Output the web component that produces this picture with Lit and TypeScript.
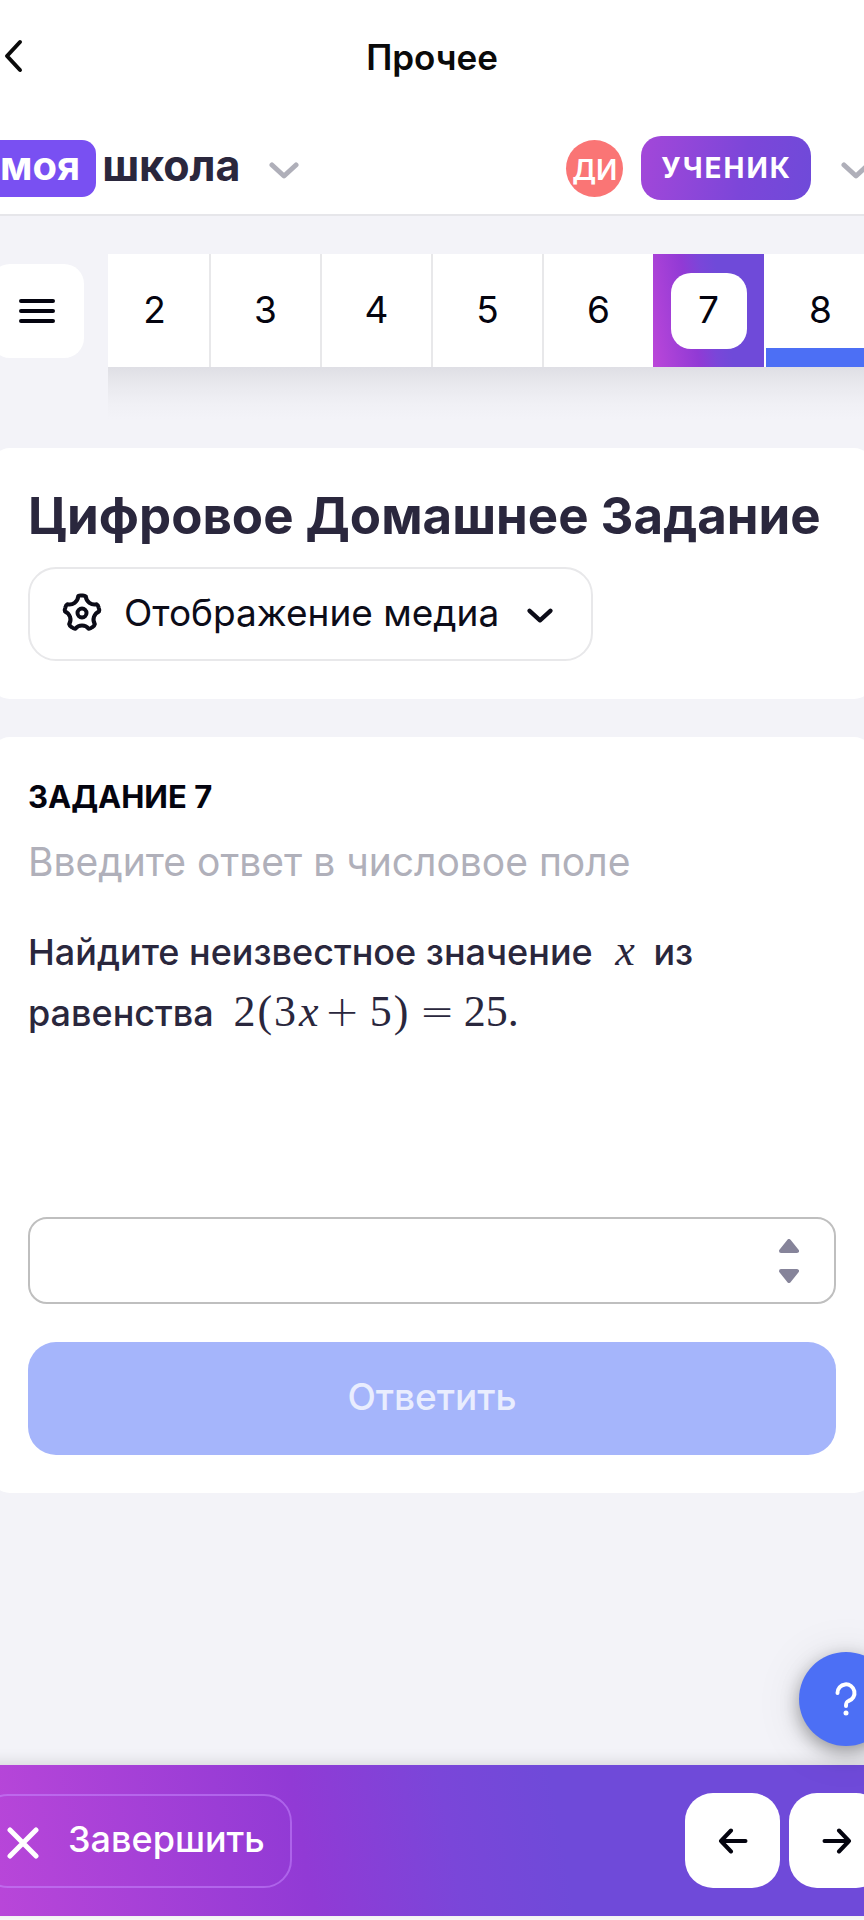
import { LitElement, html, css, svg } from "lit";
import { customElement, property, state } from "lit/decorators.js";
import { classMap } from "lit/directives/class-map.js";

const chevronDown = (size: string) => html`
  <svg class="chevron ${size}" viewBox="0 0 30 18" aria-hidden="true">
    ${svg`<path d="M3 3l12 11L27 3" fill="none" stroke="currentColor" stroke-width="5" stroke-linecap="round" stroke-linejoin="round" />`}
  </svg>
`;

/** Outline of a five-toothed gear centred in a 40 by 40 box. */
function gearPath(): string {
  const at = (deg: number, r: number) => {
    const a = (deg * Math.PI) / 180;
    return `${(20 + r * Math.cos(a)).toFixed(2)} ${(20 + r * Math.sin(a)).toFixed(2)}`;
  };
  let d = `M${at(-102, 17.5)}`;
  for (let k = 0; k < 5; k++) {
    const t = -90 + 72 * k;
    d += `Q${at(t - 8, 18)} ${at(t, 17.5)}Q${at(t + 8, 18)} ${at(t + 13, 17)}`;
    d += `C${at(t + 20, 12)} ${at(t + 52, 12)} ${at(t + 59, 17)}`;
  }
  return d + "z";
}

@customElement("task-tabs")
export class TaskTabs extends LitElement {
  @property({ type: Array }) items: number[] = [];
  @property({ type: Number }) current = 0;
  @property({ type: Number }) answered = 0;

  static styles = css`
    :host {
      display: block;
      flex: 1;
      min-width: 0;
      position: relative;
    }
    .strip {
      display: flex;
      overflow: hidden;
      background: #fff;
    }
    .shade {
      position: absolute;
      left: 0;
      right: 0;
      top: 100%;
      height: 52px;
      background: linear-gradient(#dfdfe5, #e9e9ee 35%, #f0f0f5 70%, #f3f3f8);
    }
    .tab {
      flex: none;
      box-sizing: border-box;
      width: 111px;
      height: 113px;
      padding: 0 0 2px;
      border: 0;
      border-right: 2px solid #e8e8ea;
      background: #fff;
      color: #04040f;
      font: 400 37px/40px Inter, sans-serif;
    }
    .tab:first-child {
      margin-left: -8px;
    }
    .tab.current {
      display: grid;
      place-items: center;
      width: 113px;
      margin-left: -2px;
      padding: 0;
      border-right-color: #fff;
      background: linear-gradient(80deg, #bb47d9, #913ad5 36%, #7a46d9 50%, #6f4ad9 62%);
    }
    .tab.answered {
      box-shadow: inset 0 -19px #4c6ff5;
    }
    .pill {
      display: grid;
      place-items: center;
      box-sizing: border-box;
      width: 76px;
      height: 76px;
      padding-bottom: 2px;
      border-radius: 20px;
      background: #fff;
    }
  `;

  render() {
    return html`
      <div class="strip">
        ${this.items.map(
          (n) => html`<button
            class=${classMap({
              tab: true,
              current: n === this.current,
              answered: n === this.answered,
            })}
            @click=${() => (this.current = n)}
          >
            ${n === this.current ? html`<span class="pill">${n}</span>` : n}
          </button>`
        )}
      </div>
      <div class="shade"></div>
    `;
  }
}

@customElement("app-root")
export class AppRoot extends LitElement {
  @state() private answer = "";

  static styles = css`
    :host {
      display: block;
      overflow: hidden;
      background: #fff;
      color: #2a273d;
      font: 500 36px/40px Inter, sans-serif;
    }
    * {
      box-sizing: border-box;
    }
    button {
      padding: 0;
      border: 0;
      background: none;
      color: inherit;
      font: inherit;
    }
    svg {
      display: block;
    }
    h1,
    h2,
    p {
      margin: 0;
    }
    .frame {
      position: relative;
      display: flex;
      flex-direction: column;
      min-height: 100vh;
      margin: 0 -20px;
      padding-bottom: 4px;
    }
    .topbar {
      display: grid;
      grid-template-columns: 1fr auto 1fr;
      align-items: center;
      height: 114px;
      padding: 0 24px;
      color: #0a0a0a;
    }
    .title {
      font-size: 35px;
      font-weight: 600;
    }
    .back {
      justify-self: start;
      width: 20px;
      padding-bottom: 2px;
    }
    .header {
      display: flex;
      align-items: center;
      justify-content: space-between;
      height: 102px;
      padding: 8px 13px 0 3px;
      border-bottom: 2px solid #e6e6ea;
    }
    .brand,
    .account {
      display: flex;
      align-items: center;
    }
    .brand {
      color: #2a273d;
      font-size: 43px;
      font-weight: 700;
      line-height: 51px;
      text-decoration: none;
    }
    .brand-mark {
      height: 57px;
      padding: 0 16px 6px 17px;
      border-radius: 14px;
      background: #7950f2;
      color: #fff;
      font-size: 40px;
    }
    .brand-name {
      height: 57px;
      padding-left: 6px;
    }
    .chevron {
      width: 30px;
      height: 18px;
    }
    .chevron.small {
      width: 26px;
      height: 16px;
    }
    .muted {
      padding-top: 6px;
      color: #afafb9;
    }
    .brand-group {
      display: flex;
      align-items: center;
      gap: 28px;
    }
    .avatar {
      width: 57px;
      height: 57px;
      padding-top: 4px;
      border-radius: 50%;
      background: #fa7575;
      color: #fff;
      font-size: 28px;
      font-weight: 600;
      line-height: 53px;
      text-align: center;
    }
    .role {
      height: 64px;
      margin: 0 30px 0 18px;
      padding: 0 19px 0 20px;
      border-radius: 20px;
      background: linear-gradient(100deg, #a347d9, #7c46d9 60%, #6f4ad9);
      color: #fff;
      font-size: 28px;
      font-weight: 700;
      letter-spacing: 2px;
    }
    .body {
      flex: 1;
      padding: 38px 11px;
      background: #f3f3f8;
    }
    .tasks {
      display: flex;
      align-items: center;
      gap: 24px;
      margin: 0 -11px 81px -1px;
    }
    .menu {
      display: grid;
      place-items: center;
      flex: none;
      width: 94px;
      height: 94px;
      border-radius: 20px;
      background: #fff;
      color: #04040f;
    }
    .menu svg {
      width: 36px;
    }
    .card {
      padding: 37px 37px 38px;
      border-radius: 19px;
      background: #fff;
    }
    .card + .card {
      margin-top: 38px;
    }
    .heading {
      margin-bottom: 20px;
      font-size: 51px;
      font-weight: 700;
      line-height: 62px;
    }
    .media {
      display: flex;
      align-items: center;
      height: 94px;
      padding: 0 38px 2px 32px;
      border: 2px solid #e8e8ea;
      border-radius: 28px;
      color: #0c0c18;
      font-size: 37px;
      font-weight: 400;
    }
    .gear {
      width: 40px;
      height: 40px;
      margin-right: 22px;
    }
    .media .chevron {
      margin: 6px 0 0 28px;
    }
    .number {
      color: #04040f;
      font-size: 31px;
      font-weight: 700;
      line-height: 46px;
    }
    .hint {
      display: block;
      margin: 14px 0 32px;
      color: #b0b0ba;
      font-size: 39px;
      font-weight: 400;
      line-height: 56px;
    }
    .question {
      max-width: 720px;
      min-height: 122px;
      margin-bottom: 173px;
      line-height: 61px;
    }
    .math {
      margin: 0 6px 0 10px;
      font: 400 44px/44px "Liberation Serif", serif;
      white-space: nowrap;
    }
    .math i {
      margin: 0 3px;
    }
    .paren {
      margin: 0 2px;
    }
    .plus {
      margin: 0 10px 0 3px;
      font: 200 42px/44px "DejaVu Sans", sans-serif;
    }
    .equals {
      margin: 0 9px;
      font: 200 42px/44px "DejaVu Sans", sans-serif;
    }
    .field {
      display: flex;
      align-items: center;
      height: 87px;
      margin-bottom: 38px;
      padding-right: 35px;
      border: 2px solid #bfbfbf;
      border-radius: 19px;
    }
    .input {
      flex: 1;
      min-width: 0;
      height: 100%;
      padding: 0 20px;
      border: 0;
      outline: 0;
      background: none;
      color: inherit;
      font: inherit;
      appearance: textfield;
    }
    .steps {
      display: grid;
      gap: 16px;
    }
    .step {
      width: 20px;
      height: 14px;
      color: #86849a;
    }
    .submit {
      display: block;
      width: 100%;
      height: 113px;
      padding-bottom: 4px;
      border-radius: 28px;
      background: #a5b5fb;
      color: #e9edfe;
      font-size: 37px;
    }
    .help {
      position: absolute;
      right: -9px;
      bottom: 174px;
      display: grid;
      place-items: center;
      width: 94px;
      height: 94px;
      border-radius: 50%;
      background: #4c6ff5;
      color: #fff;
      box-shadow: 0 6px 18px rgba(0, 0, 0, 0.35), 0 4px 48px rgba(0, 0, 0, 0.1);
    }
    .help svg {
      width: 24px;
      height: 36px;
    }
    .footer {
      position: relative;
      display: flex;
      align-items: center;
      gap: 9px;
      height: 151px;
      background: linear-gradient(80deg, #bb47d9, #913ad5 36%, #7a46d9 52%, #6f4ad9 64%);
      box-shadow: 0 -2px 14px rgba(0, 0, 0, 0.13);
      color: #fff;
    }
    .finish {
      display: flex;
      align-items: center;
      gap: 29px;
      height: 94px;
      margin-right: auto;
      padding: 0 25px 4px;
      border: 2px solid rgba(200, 140, 255, 0.5);
      border-radius: 28px;
    }
    .finish svg {
      width: 32px;
      height: 32px;
      margin-top: 8px;
    }
    .arrow {
      display: grid;
      place-items: center;
      width: 95px;
      height: 95px;
      border-radius: 28px;
      background: #fff;
      color: #04040f;
    }
    .arrow svg {
      width: 30px;
      height: 26px;
    }
  `;

  private stepBy(delta: number) {
    this.answer = String((Number(this.answer) || 0) + delta);
  }

  render() {
    return html`
      <div class="frame">
        <div class="topbar">
          <button class="back" aria-label="Назад">
            <svg width="20" height="34" viewBox="0 0 20 34">
              <path d="M16 3L3 17l13 14" fill="none" stroke="currentColor" stroke-width="4" stroke-linecap="round" stroke-linejoin="round" />
            </svg>
          </button>
          <div class="title">Прочее</div>
        </div>

        <header class="header">
          <div class="brand-group">
            <a class="brand" href="#"><span class="brand-mark">моя</span><span class="brand-name">школа</span></a>
            <button class="muted" aria-label="Разделы">${chevronDown("")}</button>
          </div>
          <div class="account">
            <span class="avatar">ДИ</span>
            <button class="role">УЧЕНИК</button>
            <button class="muted" aria-label="Профиль">${chevronDown("")}</button>
          </div>
        </header>

        <main class="body">
          <nav class="tasks">
            <button class="menu" aria-label="Список заданий">
              <svg height="26" viewBox="0 0 36 26">
                <path d="M2 3h32M2 13h32M2 23h32" stroke="currentColor" stroke-width="4" stroke-linecap="round" />
              </svg>
            </button>
            <task-tabs .items=${[2, 3, 4, 5, 6, 7, 8]} current="7" answered="8"></task-tabs>
          </nav>

          <section class="card">
            <h1 class="heading">Цифровое Домашнее Задание</h1>
            <button class="media">
              <svg class="gear" viewBox="0 0 40 40" fill="none" stroke="currentColor" stroke-width="4" stroke-linejoin="round" aria-hidden="true">
                <path d=${gearPath()} />
                <circle cx="20" cy="20" r="4.500" />
              </svg>
              <span>Отображение медиа</span>
              ${chevronDown("small")}
            </button>
          </section>

          <section class="card">
            <h2 class="number">ЗАДАНИЕ 7</h2>
            <label class="hint" for="answer">Введите ответ в числовое поле</label>
            <p class="question">
              Найдите неизвестное значение <span class="math"><i>x</i></span> из
              равенства
              <span class="math">2<span class="paren">(</span>3<i>x</i><span class="plus">+</span>5<span class="paren">)</span><span class="equals">=</span>25.</span>
            </p>
            <div class="field">
              <input
                class="input"
                id="answer"
                type="number"
                .value=${this.answer}
                @input=${(e: Event) => (this.answer = (e.target as HTMLInputElement).value)}
              />
              <div class="steps">
                <button class="step" aria-label="Больше" @click=${() => this.stepBy(1)}>
                  <svg viewBox="0 0 20 14"><path d="M10 2L18 12H2z" fill="currentColor" stroke="currentColor" stroke-width="4" stroke-linejoin="round" /></svg>
                </button>
                <button class="step" aria-label="Меньше" @click=${() => this.stepBy(-1)}>
                  <svg viewBox="0 0 20 14"><path d="M10 12L18 2H2z" fill="currentColor" stroke="currentColor" stroke-width="4" stroke-linejoin="round" /></svg>
                </button>
              </div>
            </div>
            <button class="submit">Ответить</button>
          </section>
        </main>

        <footer class="footer">
          <button class="finish">
            <svg viewBox="0 0 32 32" aria-hidden="true">
              <path d="M3 3l26 26M29 3L3 29" stroke="currentColor" stroke-width="5" stroke-linecap="round" />
            </svg>
            <span>Завершить</span>
          </button>
          <button class="arrow" aria-label="Предыдущее задание">
            <svg viewBox="0 0 30 26"><path d="M13 2.500L3 13l10 10.500M3 13h24.500" fill="none" stroke="currentColor" stroke-width="4" stroke-linecap="round" stroke-linejoin="round" /></svg>
          </button>
          <button class="arrow" aria-label="Следующее задание">
            <svg viewBox="0 0 30 26"><path d="M17 2.500L27 13 17 23.500M27 13H2.500" fill="none" stroke="currentColor" stroke-width="4" stroke-linecap="round" stroke-linejoin="round" /></svg>
          </button>
        </footer>

        <button class="help" aria-label="Помощь">
          <svg viewBox="0 0 24 36">
            <path d="M3.500 12a8.500 8.500 0 1 1 11 8c-1.800.7-2.500 1.300-2.500 5" fill="none" stroke="currentColor" stroke-width="4" stroke-linecap="round" />
            <circle cx="12" cy="32" r="2.500" fill="currentColor" />
          </svg>
        </button>
      </div>
    `;
  }
}
